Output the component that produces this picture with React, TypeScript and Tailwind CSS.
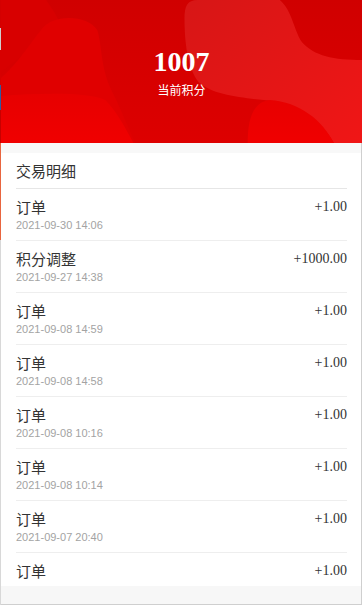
import React from 'react';

interface Record {
  id: number;
  title: string;
  time?: string;
  amount: string;
}

const RECORDS: Record[] = [
  { id: 1, title: '订单', time: '2021-09-30 14:06', amount: '+1.00' },
  { id: 2, title: '积分调整', time: '2021-09-27 14:38', amount: '+1000.00' },
  { id: 3, title: '订单', time: '2021-09-08 14:59', amount: '+1.00' },
  { id: 4, title: '订单', time: '2021-09-08 14:58', amount: '+1.00' },
  { id: 5, title: '订单', time: '2021-09-08 10:16', amount: '+1.00' },
  { id: 6, title: '订单', time: '2021-09-08 10:14', amount: '+1.00' },
  { id: 7, title: '订单', time: '2021-09-07 20:40', amount: '+1.00' },
  { id: 8, title: '订单', amount: '+1.00' },
];

const CJK = "font-['Noto_Sans_CJK_SC',sans-serif]";
const SERIF = "font-['Liberation_Serif',serif]";

// decorative red blobs behind the points total
function HeaderBg() {
  return (
    <svg className="absolute inset-0 w-full h-full" viewBox="0 0 360 143" preserveAspectRatio="none">
      <defs>
        <linearGradient id="base" x1="0" y1="0" x2="0" y2="1">
          <stop offset="0" stopColor="#d00000" />
          <stop offset="1" stopColor="#dd0000" />
        </linearGradient>
        <linearGradient id="blob" x1="0" y1="0" x2="1" y2="1">
          <stop offset="0" stopColor="#d71616" />
          <stop offset="1" stopColor="#f01616" />
        </linearGradient>
        <linearGradient id="low" x1="0" y1="0" x2="0" y2="1">
          <stop offset="0" stopColor="#e70000" />
          <stop offset="1" stopColor="#f00000" />
        </linearGradient>
      </defs>
      <rect width="360" height="143" fill="url(#base)" />
      <path d="M0,0 L45,0 C52,10 58,20 60,26 L0,72 Z" fill="#d80000" />
      <path d="M0,78 C18,62 30,42 40,30 C50,14 86,14 96,30 C101,46 99,66 110,90 C120,110 126,126 134,143 L0,143 Z" fill="#e00000" />
      <path d="M0,96 C40,93 88,92 104,100 C116,112 124,128 132,143 L0,143 Z" fill="url(#low)" />
      <path d="M183,18 C183,6 186,0 196,0 L278,0 C290,10 292,30 300,42 C312,56 332,60 360,60 L360,143 L332,143 C320,122 302,106 272,101 C244,98 212,96 197,82 C186,68 183,42 183,18 Z" fill="url(#blob)" />
      <path d="M246,143 C246,122 250,102 268,100 C298,102 320,120 332,143 Z" fill="url(#low)" />
    </svg>
  );
}

export default function App() {
  return (
    <div className="w-[362px] h-[605px] overflow-hidden flex bg-[#f8f8f8]">
      {/* 1px strip of the page underneath */}
      <div className="w-px flex flex-col shrink-0">
        <div className="h-[28px] bg-[#d40000]" />
        <div className="h-[22px] bg-[#cfcfcf]" />
        <div className="h-[35px] bg-[#d80000]" />
        <div className="h-[25px] bg-[#2f5aa0]" />
        <div className="h-[33px] bg-[#c80000]" />
        <div className="h-[97px] bg-[#e8653f]" />
        <div className="flex-1 bg-[#d8d8d8]" />
      </div>

      <div className="flex-1 flex flex-col min-w-0">
        <div className="relative h-[143px] shrink-0 overflow-hidden">
          <HeaderBg />
          <div className="relative flex flex-col items-center pt-[48px]">
            <div className={`${SERIF} text-[28px] leading-[28px] font-bold text-white`}>1007</div>
            <div className={`${CJK} text-[12px] leading-[16px] text-white mt-[6px]`}>当前积分</div>
          </div>
        </div>

        <div className="flex-1 flex flex-col border-r border-[#cfcfcf] min-h-0">
          <div className="h-[10px] shrink-0" />
          <div className="flex-1 bg-white overflow-hidden min-h-0">
            <div className={`${CJK} ml-[15px] mr-[14px] pt-[8px] pb-[7px] text-[15px] leading-[20px] text-[#333] border-b border-[#e6e6e6]`}>
              交易明细
            </div>
            {RECORDS.map((r) => (
              <div key={r.id} className="ml-[15px] mr-[14px] pt-[8px] pb-[8px] flex items-start justify-between border-b border-[#eeeeee]">
                <div className="flex flex-col">
                  <span className={`${CJK} text-[15px] leading-[20px] text-[#333]`}>{r.title}</span>
                  {r.time && (
                    <span className="font-['Liberation_Sans',sans-serif] text-[11px] leading-[14px] text-[#a3a3a3] mt-px">{r.time}</span>
                  )}
                </div>
                <span className={`${SERIF} text-[14px] leading-[20px] text-[#333]`}>{r.amount}</span>
              </div>
            ))}
          </div>
          <div className="h-[19px] shrink-0 bg-[#f7f7f7] border-b border-[#cfcfcf]" />
        </div>
      </div>
    </div>
  );
}
